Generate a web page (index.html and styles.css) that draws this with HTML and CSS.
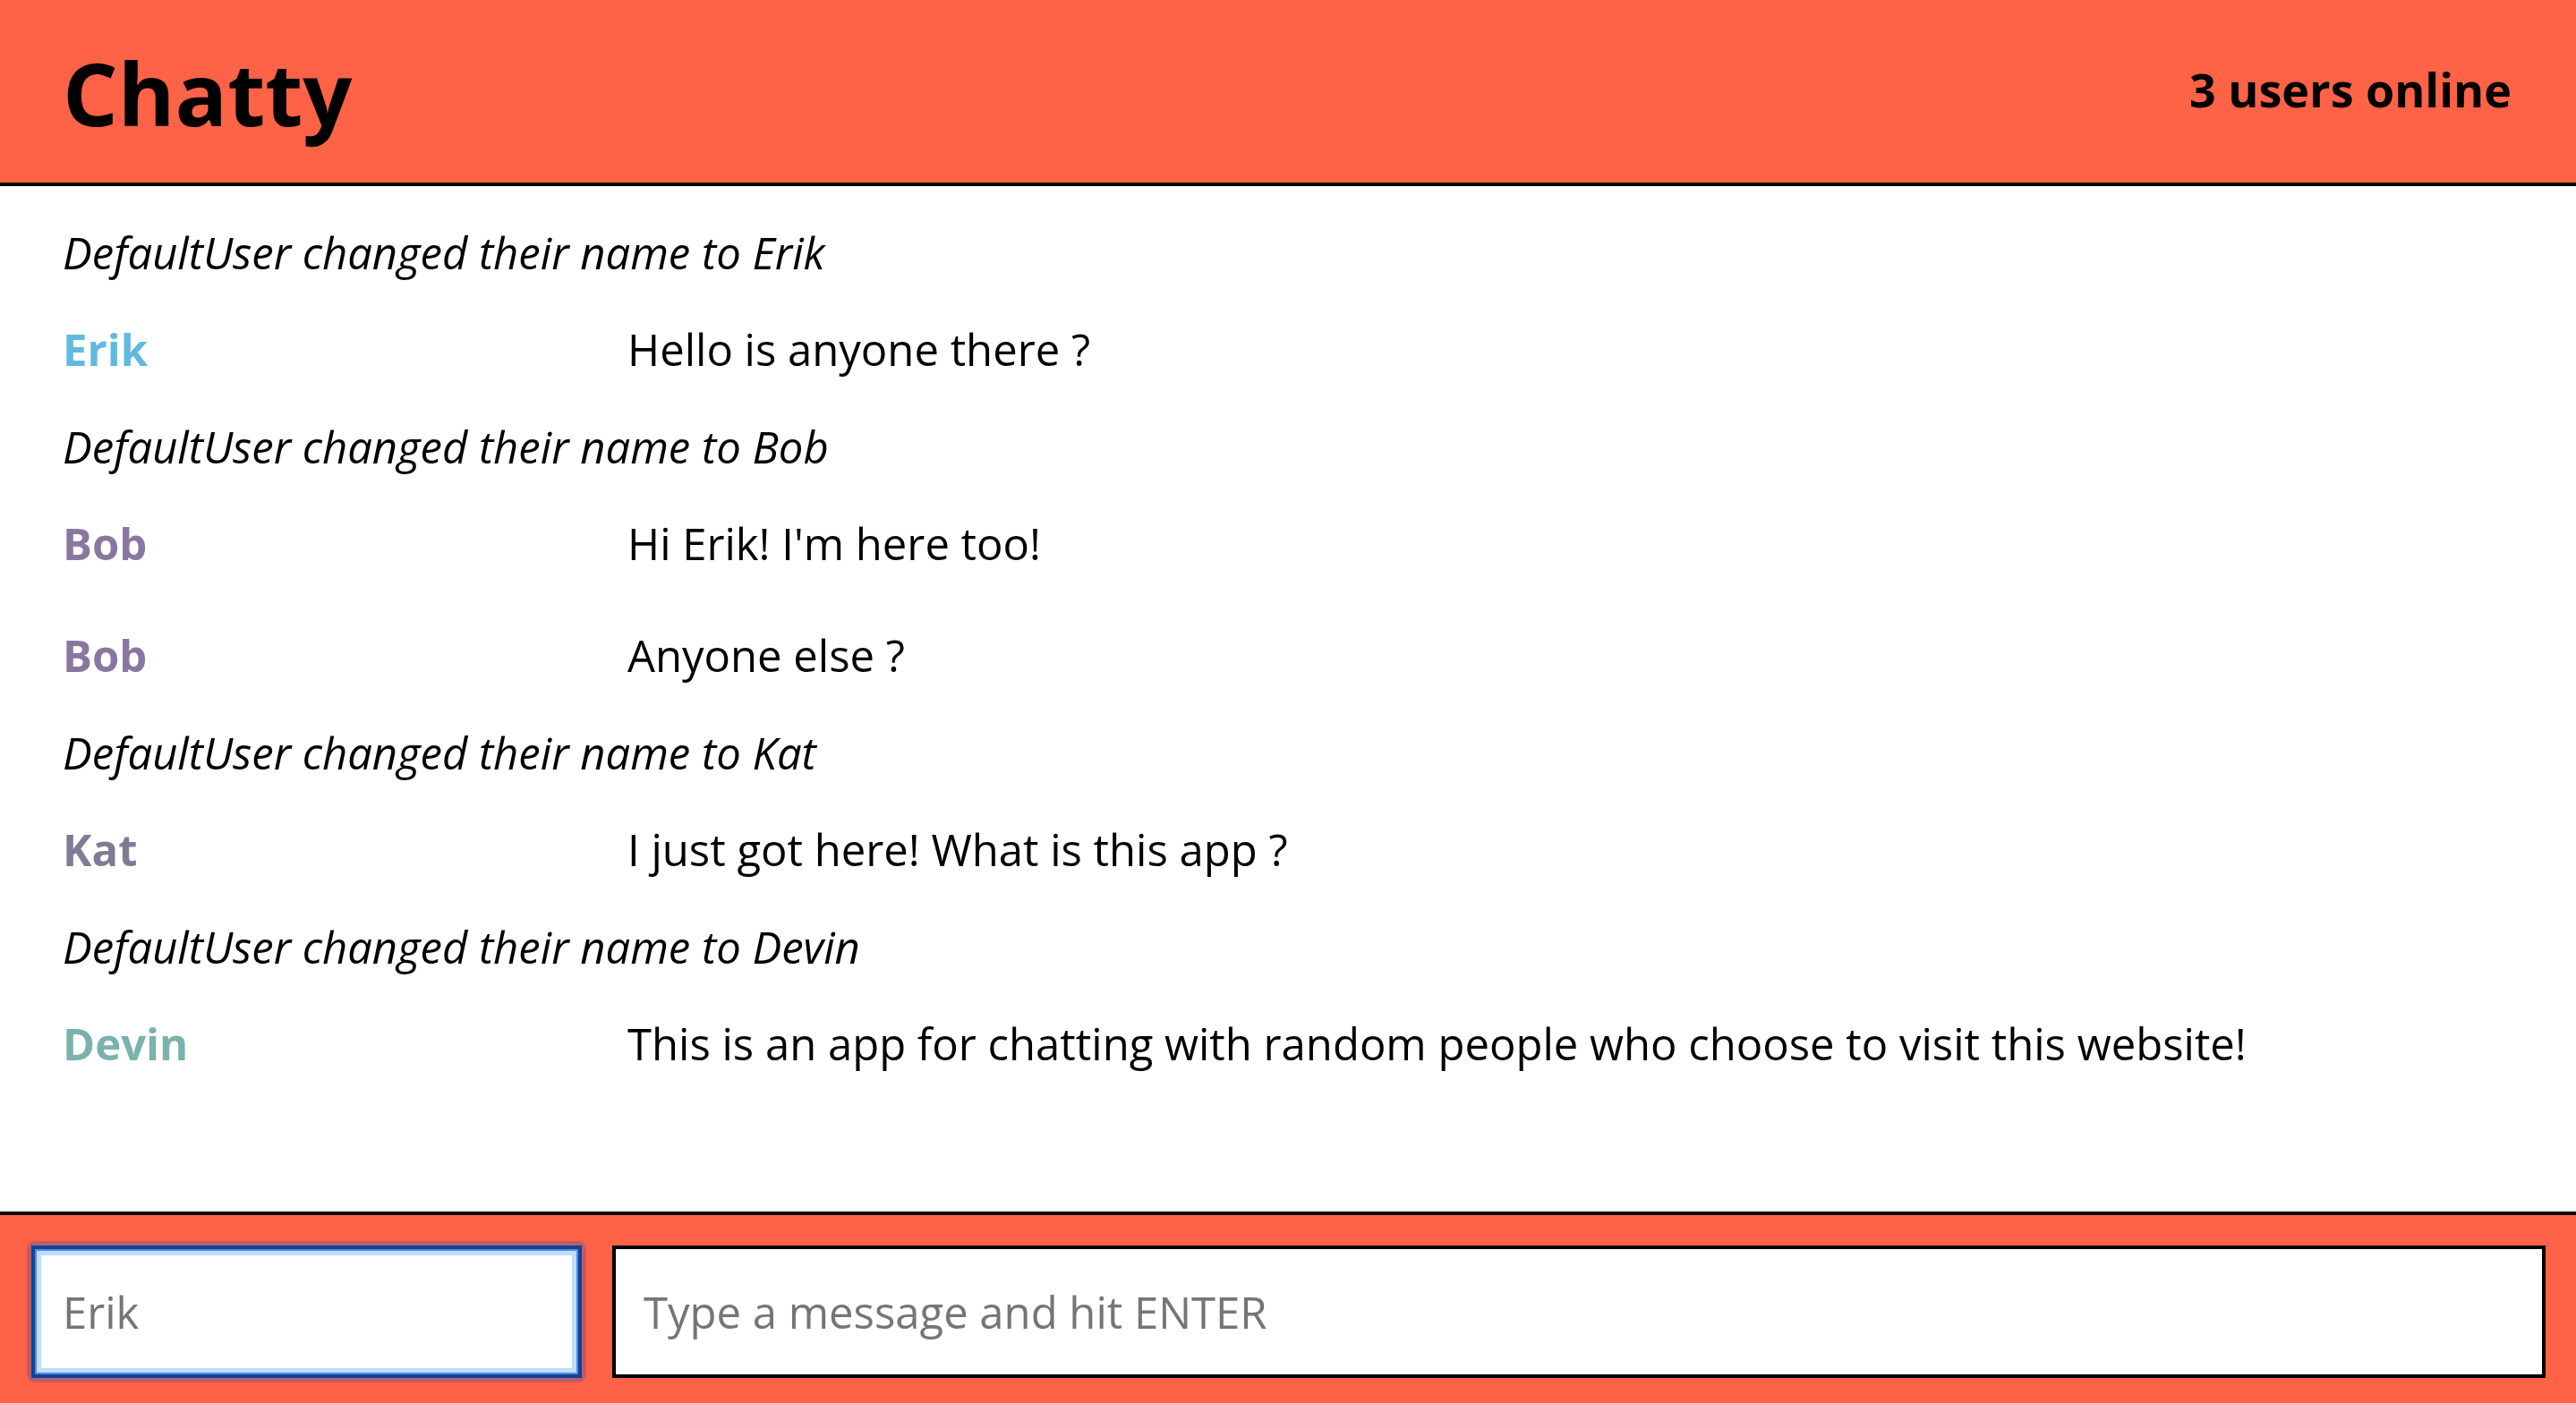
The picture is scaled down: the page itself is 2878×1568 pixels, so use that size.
FILE: index.html
```html
<!DOCTYPE html>
<html lang="en">
<head>
<meta charset="utf-8">
<title>Chatty</title>
<link rel="stylesheet" href="styles.css">
</head>
<body>
<div class="app">
  <header class="navbar">
    <h1 class="brand">Chatty</h1>
    <span class="online">3 users online</span>
  </header>
  <main class="messages">
    <div class="system">DefaultUser changed their name to Erik</div>
    <div class="message"><span class="username erik">Erik</span><span class="content">Hello is anyone there ?</span></div>
    <div class="system">DefaultUser changed their name to Bob</div>
    <div class="message"><span class="username bob">Bob</span><span class="content">Hi Erik! I'm here too!</span></div>
    <div class="message"><span class="username bob">Bob</span><span class="content">Anyone else ?</span></div>
    <div class="system">DefaultUser changed their name to Kat</div>
    <div class="message"><span class="username kat">Kat</span><span class="content">I just got here! What is this app ?</span></div>
    <div class="system">DefaultUser changed their name to Devin</div>
    <div class="message"><span class="username devin">Devin</span><span class="content">This is an app for chatting with random people who choose to visit this website!</span></div>
  </main>
  <footer class="chatbar">
    <div class="name-field"><input class="chatbar-input username-input" type="text" placeholder="Erik"></div>
    <input class="chatbar-input message-input" type="text" placeholder="Type a message and hit ENTER">
  </footer>
</div>
</body>
</html>
```
FILE: styles.css
```css
* { box-sizing: border-box; }
html, body { margin: 0; padding: 0; height: 100%; }
body {
  font-family: "Open Sans", "Noto Sans", sans-serif;
  color: #000;
  background: #fff;
}
.app {
  height: 100vh;
  display: flex;
  flex-direction: column;
}
.navbar {
  height: 208px;
  flex: 0 0 auto;
  background: tomato;
  border-bottom: 4px solid #000;
  display: flex;
  align-items: center;
  justify-content: space-between;
  padding: 0 72px 0 70px;
}
.brand {
  margin: 0;
  font-size: 97px;
  font-weight: 700;
  line-height: 1;
  padding-top: 2px;
}
.online {
  font-size: 52px;
  font-weight: 700;
  padding-bottom: 6px;
}
.messages {
  flex: 1 1 auto;
  padding: 28px 70px 0 70px;
  font-size: 49px;
  line-height: 65px;
  overflow: hidden;
}
.system {
  font-style: italic;
  padding: 14px 0 13px;
}
.message {
  display: grid;
  grid-template-columns: 631px 1fr;
  padding: 30px 0;
}
.username { font-weight: 700; }
.erik { color: #62b9e0; }
.bob { color: #8a77a0; }
.kat { color: #7f7b96; }
.devin { color: #7ab2ad; }
.chatbar {
  flex: 0 0 214px;
  background: tomato;
  border-top: 4px solid #000;
  display: flex;
  align-items: flex-start;
  gap: 34px;
  padding: 34px 34px 0 35px;
}
.chatbar-input {
  height: 148px;
  font-family: "Open Sans", "Noto Sans", sans-serif;
  font-size: 49px;
  background: #fff;
  color: #000;
  padding: 0 30px 0 31px;
  border: 4px solid #000;
  border-radius: 0;
  outline: none;
}
.chatbar-input::placeholder { color: #757575; }
.name-field {
  flex: 0 0 625px;
  margin: -5px;
  padding: 5px;
  border-radius: 9px;
  background: rgba(30, 80, 180, 0.3);
}
.username-input {
  width: 100%;
  display: block;
  border-color: #0b4598;
  box-shadow: inset 0 0 0 2px #4f8be0, inset 0 0 0 7px #c3dbf8;
}
.message-input {
  flex: 1 1 auto;
  min-width: 0;
}
```
